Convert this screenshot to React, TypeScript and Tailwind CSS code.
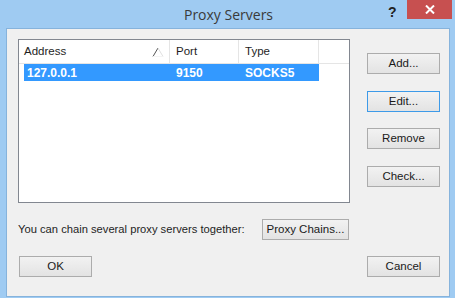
import React from 'react';

const font = { fontFamily: '"Liberation Sans", Arial, sans-serif' };

interface BtnProps {
  label: string;
  focused?: boolean;
  className?: string;
}

const WinButton: React.FC<BtnProps> = ({ label, focused, className }) => (
  <button
    className={`h-[21px] w-[73px] border text-[11.5px] text-[#1a1a1a] bg-gradient-to-b from-[#f2f2f2] to-[#e3e3e3] ${
      focused ? 'border-[#3d9ae8]' : 'border-[#acacac]'
    } ${className ?? ''}`}
  >
    {label}
  </button>
);

const SortArrow: React.FC = () => (
  <svg width="12" height="10" viewBox="0 0 12 10" className="absolute right-[5px] top-[7px]">
    <line x1="1" y1="9.5" x2="6" y2="1" stroke="#555" strokeWidth="1" />
    <line x1="6" y1="1" x2="11" y2="9.5" stroke="#e0e0e0" strokeWidth="1" />
    <line x1="1" y1="9.5" x2="11" y2="9.5" stroke="#f4f4f4" strokeWidth="1" />
  </svg>
);

const App: React.FC = () => {
  return (
    <div className="w-[455px] h-[298px] bg-[#9fcbf2] flex flex-col overflow-hidden" style={font}>
      {/* title bar */}
      <div className="h-[28px] flex items-start relative">
        <div className="flex-1 text-center text-[14px] text-[#3a3a3a] pt-[4px] pl-[2px]" style={{ fontFamily: '"Open Sans", "Noto Sans", sans-serif' }}>
          Proxy Servers
        </div>
        <div className="absolute left-[388px] top-[2px] text-[14px] font-bold text-[#222]">?</div>
        <div className="absolute left-[407px] top-0 w-[45px] h-[19px] bg-[#c75050] flex items-center justify-center">
          <svg width="10" height="9" viewBox="0 0 10 9">
            <path d="M1 0.5 L9 8.5 M9 0.5 L1 8.5" stroke="#fff" strokeWidth="2" />
          </svg>
        </div>
      </div>

      {/* client */}
      <div className="ml-[6px] mr-[5px] h-[269px] border border-[#86b3dc] bg-[#f0f0f0] flex flex-col">
        <div className="flex pt-[10px] pl-[11px]">
          {/* list */}
          <div className="w-[332px] h-[164px] border border-[#828790] bg-white">
            <div className="flex h-[24px] text-[11.5px] text-[#1e1e1e] border-b border-[#e5e5e5]">
              <div className="relative w-[151px] pl-[5px] flex items-center border-r border-[#e5e5e5]">
                Address
                <SortArrow />
              </div>
              <div className="w-[69px] pl-[6px] flex items-center border-r border-[#e5e5e5]">Port</div>
              <div className="w-[80px] pl-[6px] flex items-center border-r border-[#e5e5e5]">Type</div>
            </div>
            <div className="ml-[5px] w-[295px] h-[17px] bg-[#3399ff] flex items-center text-white text-[12px] font-bold">
              <div className="w-[146px] pl-[3px]">127.0.0.1</div>
              <div className="w-[69px] pl-[6px]">9150</div>
              <div className="pl-[6px]">SOCKS5</div>
            </div>
          </div>

          {/* right buttons */}
          <div className="flex flex-col ml-[17px] pt-[14px]">
            <WinButton label="Add..." />
            <WinButton label="Edit..." focused className="mt-[17px]" />
            <WinButton label="Remove" className="mt-[16px]" />
            <WinButton label="Check..." className="mt-[17px]" />
          </div>
        </div>

        <div className="flex items-center pl-[11px] mt-[16px]">
          <div className="w-[244px] text-[11.2px] text-[#1e1e1e]">You can chain several proxy servers together:</div>
          <WinButton label="Proxy Chains..." className="w-[87px]" />
        </div>

        <div className="flex justify-between pl-[12px] pr-[9px] mt-[16px]">
          <WinButton label="OK" />
          <WinButton label="Cancel" />
        </div>
      </div>
    </div>
  );
};

export default App;
